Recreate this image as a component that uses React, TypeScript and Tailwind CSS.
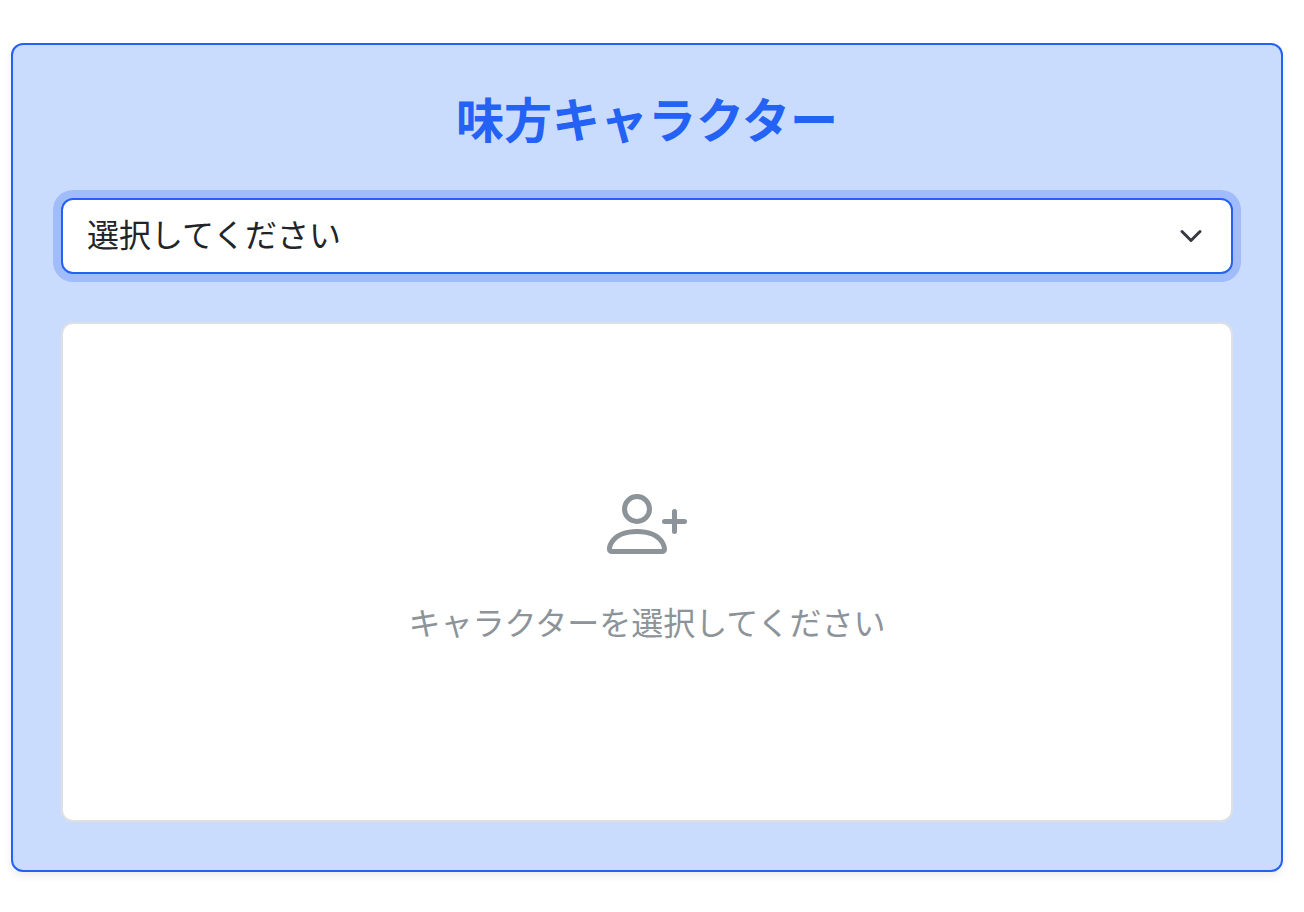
import React, { useState } from "react";
import { BsPersonPlus } from "react-icons/bs";

export default function App() {
  const [character, setCharacter] = useState("");

  return (
    <main className="pt-[43px] pr-[21px] pb-10 pl-[11px] font-['Liberation_Sans','Noto_Sans_CJK_JP',sans-serif]">
      <section className="rounded-xl border-2 border-[#2462f6] bg-[#c9dcfd] p-12 shadow-[0_4px_8px_rgba(0,0,0,0.075)]">
        {/* Title */}
        <h2 className="mb-12 text-center text-5xl leading-[57px] font-bold text-[#2462f6]">
          味方キャラクター
        </h2>

        {/* Character picker */}
        <div className="relative mb-12">
          <select
            value={character}
            onChange={(e) => setCharacter(e.target.value)}
            className="block h-[76px] w-full appearance-none rounded-xl border-2 border-[#2462f6] bg-white px-6 text-[32px] leading-[48px] text-[#212529] ring-8 ring-[#a0bcfa] outline-none"
            aria-label="味方キャラクター"
          >
            <option value="">選択してください</option>
          </select>
          <svg
            viewBox="0 0 16 16"
            className="pointer-events-none absolute top-[26px] right-[30px] size-6"
            fill="none"
            stroke="#343a40"
            strokeWidth="2"
            strokeLinecap="round"
            strokeLinejoin="round"
            aria-hidden="true"
          >
            <path d="m2 5 6 6 6-6" />
          </svg>
        </div>

        {/* Empty state */}
        <div className="flex min-h-[500px] flex-col items-center justify-center gap-9 rounded-xl border-2 border-[#dee0e3] bg-white pb-3 text-[#8c9399]">
          <BsPersonPlus size={80} aria-hidden="true" />
          <p className="text-[32px] leading-[48px]">キャラクターを選択してください</p>
        </div>
      </section>
    </main>
  );
}
